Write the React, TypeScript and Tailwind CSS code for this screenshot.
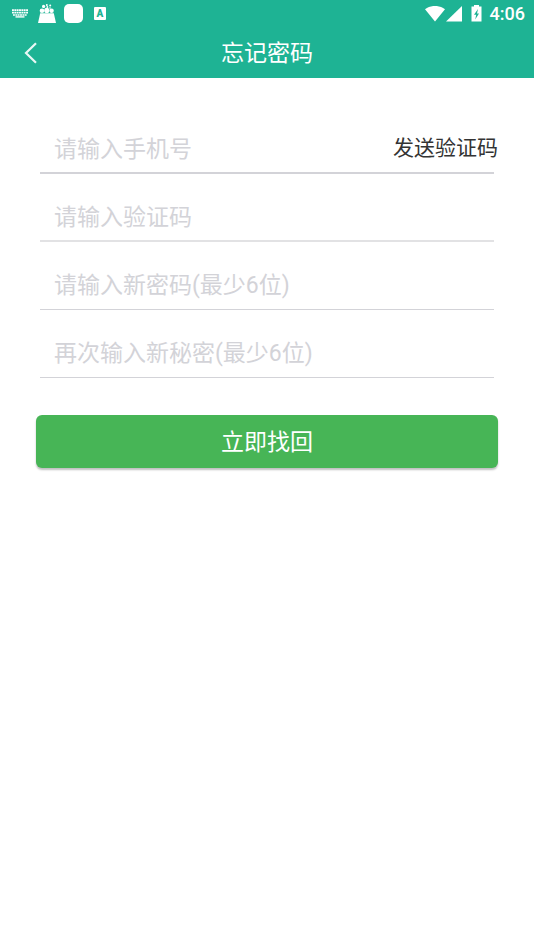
import type { ReactNode } from "react";

function StatusBar() {
  return (
    <div className="flex h-[27px] items-center justify-between pl-3 pr-[9px]" aria-label="状态栏">
      <div className="flex items-center">
        <svg width="16" height="9" viewBox="0 0 16 9" fill="none" stroke="currentColor" aria-hidden="true">
          <path d="M0 1.2h16M0 3.7h16M1 6h14" strokeWidth="1.7" strokeDasharray="1.9 0.45" />
          <path d="M3.5 7.9h9" strokeWidth="1.4" />
        </svg>
        <svg className="ml-[10px]" width="18" height="20" viewBox="0 0 18 20" fill="currentColor" aria-hidden="true">
          <path d="M2.2 9.2h13.6L18 19H0z" />
          <circle cx="4" cy="6.8" r="2.3" />
          <circle cx="8.8" cy="6.4" r="2.6" />
          <circle cx="13.6" cy="6.8" r="2.2" />
          <circle cx="5.6" cy="2.4" r="1.6" />
          <circle cx="8.8" cy="1" r="1" />
          <circle cx="9.4" cy="3" r="0.9" />
          <circle cx="12.2" cy="1.6" r="1" />
          <circle cx="12" cy="4" r="0.8" />
        </svg>
        <span className="ml-2 h-[19px] w-[19px] rounded-[5px] bg-white" />
        <span className="ml-[11px] flex h-[13px] w-3 items-center justify-center rounded-[1px] bg-white text-[10px] leading-none font-black text-[#1eb394]">
          A
        </span>
      </div>
      <div className="flex items-center">
        <svg width="20" height="16" viewBox="0 0 20 16" fill="currentColor" aria-hidden="true">
          <path d="M0 3.2C6-1.2 14-1.2 20 3.2L10 15.5z" />
        </svg>
        <svg className="ml-px" width="16" height="16" viewBox="0 0 16 16" fill="currentColor" aria-hidden="true">
          <path d="M16 0v15.5H0z" />
        </svg>
        <svg className="ml-[9px]" width="11" height="17" viewBox="0 0 11 17" fill="currentColor" aria-hidden="true">
          <path fillRule="evenodd" d="M3 0h5v1.6h2.5V16.5H.5V1.6H3zM7 4 3 9.8h2.2L4.2 14.5 8 8.4H6z" />
        </svg>
        <span className="ml-2 text-[18px] leading-none font-medium">4:06</span>
      </div>
    </div>
  );
}

type FieldProps = {
  label: string;
  type: string;
  name: string;
  line: string;
  action?: ReactNode;
};

function Field({ label, type, name, line, action }: FieldProps) {
  return (
    <div className="flex h-[68px] items-end">
      <div className={`mx-1 flex h-[52px] min-w-0 flex-1 items-center ${line}`}>
        <input
          type={type}
          name={name}
          aria-label={label}
          placeholder={label}
          className="h-full w-full min-w-0 flex-1 bg-transparent pt-1 pl-[14px] text-[23px] outline-none placeholder:text-[#d3d3d8]"
        />
        {action}
      </div>
    </div>
  );
}

export default function App() {
  return (
    <div className="min-h-screen bg-white font-[Roboto,'Noto_Sans_CJK_SC',sans-serif] text-[#333333]">
      <header className="bg-[#1eb394] text-white">
        <StatusBar />
        <div className="grid h-[51px] grid-cols-[60px_1fr_60px] items-center">
          <button type="button" aria-label="返回" className="flex h-full items-center pl-6">
            <svg width="14" height="22" viewBox="0 0 14 22" fill="none" stroke="currentColor" strokeWidth="2.2" strokeOpacity="0.9" aria-hidden="true">
              <path d="M12 1.2 2 11l10 9.8" />
            </svg>
          </button>
          <h1 className="pt-0.5 text-center text-[23px] leading-8">忘记密码</h1>
        </div>
      </header>
      <main className="px-9 pt-7">
        <form>
          <Field
            label="请输入手机号"
            type="tel"
            name="phone"
            line="border-b-2 border-[#d3d3d8]"
            action={
              <button type="button" className="-mr-1 shrink-0 pt-0.5 text-[21px] leading-8">
                发送验证码
              </button>
            }
          />
          <Field label="请输入验证码" type="text" name="code" line="border-b-2 border-[#e2e2e4]" />
          <Field label="请输入新密码(最少6位)" type="password" name="password" line="border-b border-[#d3d3d8]" />
          <Field label="再次输入新秘密(最少6位)" type="password" name="confirm" line="border-b border-[#d3d3d8]" />
          <button
            type="submit"
            className="mt-[37px] h-[53px] w-full rounded-md bg-[#47b556] pt-1 text-[23px] text-white shadow-[0_2px_2px_rgba(0,0,0,0.25)]"
          >
            立即找回
          </button>
        </form>
      </main>
    </div>
  );
}
